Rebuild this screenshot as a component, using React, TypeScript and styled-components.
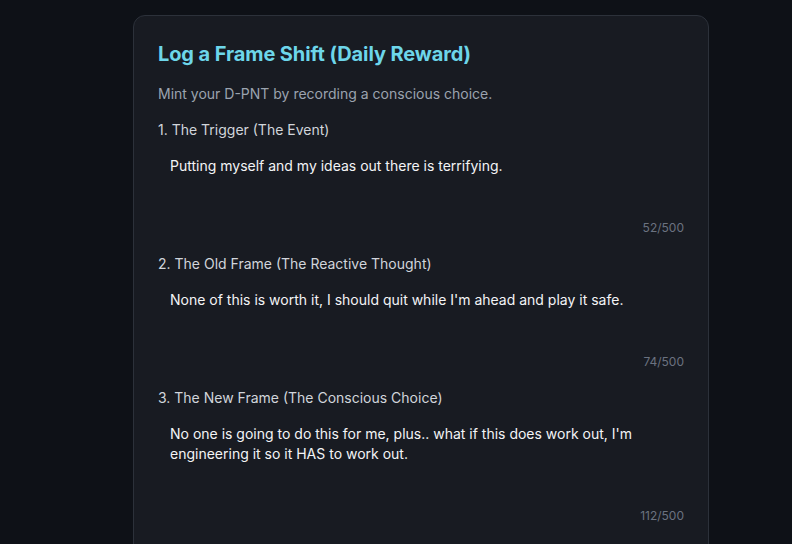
import React, { useState } from 'react';
import styled, { createGlobalStyle } from 'styled-components';

const GlobalStyle = createGlobalStyle`
  html, body {
    margin: 0;
    padding: 0;
    background: #0e1117;
    font-family: Inter, "Noto Sans", sans-serif;
    overflow: hidden;
  }
`;

const Page = styled.div`
  min-height: 544px;
  padding: 15px 0 0 133px;
  box-sizing: border-box;
`;

const Card = styled.section`
  width: 576px;
  box-sizing: border-box;
  background: #181b22;
  border: 1px solid #2c313a;
  border-radius: 12px;
  padding: 24px;
`;

const Title = styled.h2`
  margin: 0;
  font-size: 20px;
  line-height: 28px;
  font-weight: 700;
  letter-spacing: -0.1px;
  color: #6dd6ea;
`;

const Subtitle = styled.p`
  margin: 16px 0;
  font-size: 14px;
  line-height: 20px;
  color: #9ba3af;
`;

const Field = styled.div`
  display: flex;
  flex-direction: column;
  margin-bottom: 18px;
`;

const Label = styled.label`
  font-size: 14px;
  line-height: 20px;
  color: #d1d5db;
  margin-bottom: 4px;
`;

const Input = styled.textarea<{ $h: number }>`
  height: ${(p) => p.$h}px;
  box-sizing: border-box;
  resize: none;
  background: transparent;
  border: none;
  outline: none;
  padding: 12px;
  font-family: Inter, "Noto Sans", sans-serif;
  font-size: 14px;
  line-height: 20px;
  color: #f3f4f6;
  overflow: hidden;
`;

const Counter = styled.span`
  align-self: flex-end;
  margin-top: 4px;
  font-size: 12px;
  line-height: 16px;
  color: #6b7280;
`;

const fields = [
  {
    label: '1. The Trigger (The Event)',
    value: 'Putting myself and my ideas out there is terrifying.',
    h: 72,
  },
  {
    label: '2. The Old Frame (The Reactive Thought)',
    value: "None of this is worth it, I should quit while I'm ahead and play it safe. ",
    h: 72,
  },
  {
    label: '3. The New Frame (The Conscious Choice)',
    value: "No one is going to do this for me, plus.. what if this does work out, I'm engineering it so it HAS to work out. ",
    h: 92,
  },
];

const App: React.FC = () => {
  const [values, setValues] = useState(fields.map((f) => f.value));

  return (
    <Page>
      <GlobalStyle />
      <Card>
        <Title>Log a Frame Shift (Daily Reward)</Title>
        <Subtitle>Mint your D-PNT by recording a conscious choice.</Subtitle>
        {fields.map((f, i) => (
          <Field key={f.label}>
            <Label>{f.label}</Label>
            <Input
              $h={f.h}
              value={values[i]}
              maxLength={500}
              onChange={(e) => {
                const next = [...values];
                next[i] = e.target.value;
                setValues(next);
              }}
            />
            <Counter>{values[i].length}/500</Counter>
          </Field>
        ))}
      </Card>
    </Page>
  );
};

export default App;
